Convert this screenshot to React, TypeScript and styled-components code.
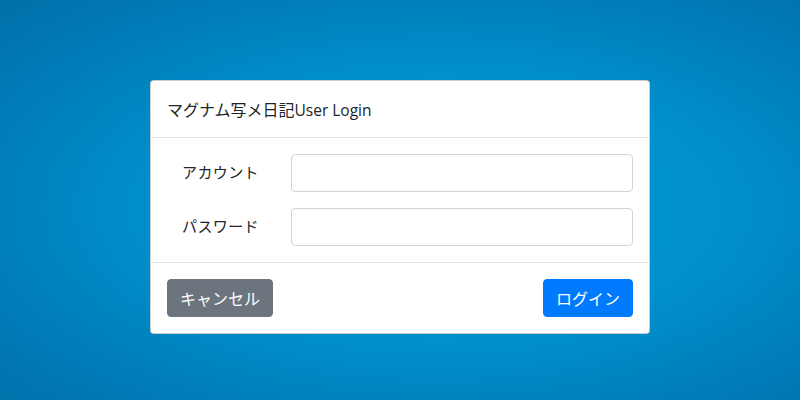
import styled, { createGlobalStyle } from "styled-components";

const GlobalStyle = createGlobalStyle`
  html, body {
    margin: 0;
    padding: 0;
    height: 100%;
  }
  body {
    font-family: "Noto Sans CJK JP", "Noto Sans", sans-serif;
    color: #212529;
  }
  * {
    box-sizing: border-box;
  }
`;

const Page = styled.div`
  width: 800px;
  height: 400px;
  display: flex;
  justify-content: center;
  align-items: flex-start;
  padding-top: 80px;
  background: radial-gradient(ellipse at 55% 52%, #009bd9 0%, #0090cc 45%, #0077b3 85%, #006fa8 100%);
`;

const Card = styled.form`
  width: 500px;
  background: #fff;
  border: 1px solid rgba(0, 0, 0, 0.2);
  border-radius: 4px;
  display: flex;
  flex-direction: column;
`;

const Header = styled.div`
  padding: 16px 16px 15px;
  border-bottom: 1px solid #e2e5e8;
`;

const Title = styled.h5`
  margin: 0;
  font-size: 16px;
  font-weight: 400;
  line-height: 24px;
  letter-spacing: 0;
  color: #212529;
  font-family: "Noto Sans CJK JP", sans-serif;
`;

const TitleLatin = styled.span`
  font-family: "Open Sans", "Noto Sans", sans-serif;
  letter-spacing: 0;
  font-size: 15.5px;
`;

const Body = styled.div`
  padding: 16px;
  display: flex;
  flex-direction: column;
  gap: 16px;
  border-bottom: 1px solid #e2e5e8;
`;

const Row = styled.div`
  display: grid;
  grid-template-columns: 94px 1fr;
  column-gap: 30px;
  align-items: center;
`;

const Label = styled.label`
  text-align: right;
  font-size: 15px;
  line-height: 24px;
  color: #212529;
  letter-spacing: 0.4px;
  padding-right: 2px;
  margin-top: -2px;
`;

const Input = styled.input`
  height: 38px;
  width: 100%;
  border: 1px solid #ced4da;
  border-radius: 4px;
  padding: 6px 12px;
  font-size: 16px;
  background: #fff;
  outline: none;
`;

const Footer = styled.div`
  padding: 16px;
  display: flex;
  justify-content: space-between;
  align-items: center;
`;

const Button = styled.button<{ $variant: "primary" | "secondary" }>`
  height: 38px;
  padding: 0 12px;
  border-radius: 4px;
  border: 1px solid ${({ $variant }) => ($variant === "primary" ? "#007bff" : "#6c757d")};
  background: ${({ $variant }) => ($variant === "primary" ? "#007bff" : "#6c757d")};
  color: #fff;
  font-family: "Noto Sans CJK JP", sans-serif;
  font-size: 16px;
  line-height: 24px;
  letter-spacing: 0;
  cursor: pointer;
`;

export default function App() {
  return (
    <>
      <GlobalStyle />
      <Page>
        <Card onSubmit={(e) => e.preventDefault()}>
          <Header>
            <Title>
              マグナム写メ日記<TitleLatin>User Login</TitleLatin>
            </Title>
          </Header>
          <Body>
            <Row>
              <Label htmlFor="account">アカウント</Label>
              <Input id="account" type="text" />
            </Row>
            <Row>
              <Label htmlFor="password">パスワード</Label>
              <Input id="password" type="password" />
            </Row>
          </Body>
          <Footer>
            <Button type="button" $variant="secondary">
              キャンセル
            </Button>
            <Button type="submit" $variant="primary">
              ログイン
            </Button>
          </Footer>
        </Card>
      </Page>
    </>
  );
}
